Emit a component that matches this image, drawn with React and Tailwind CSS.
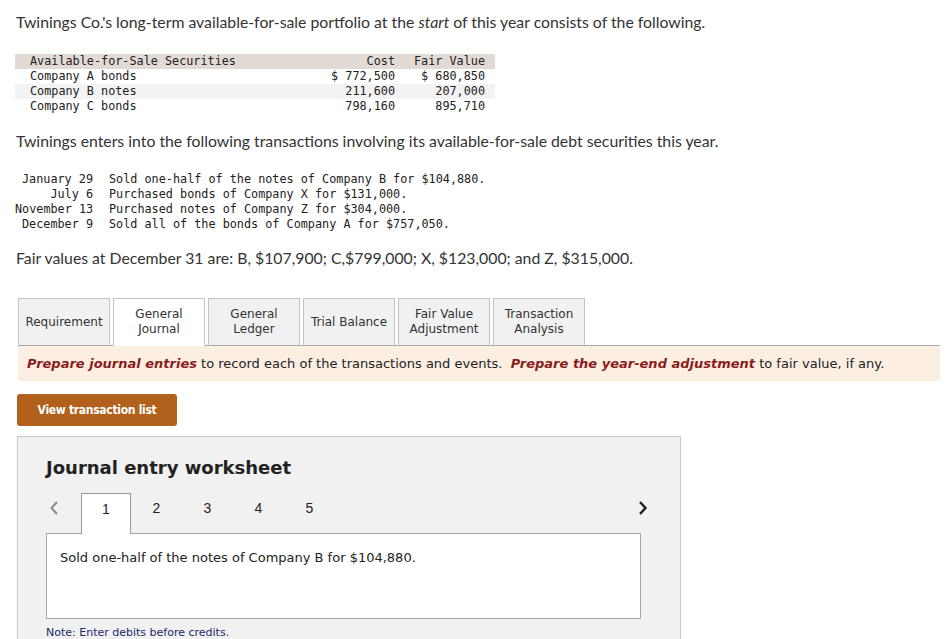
import React from "react";

const holdings = [
  { name: "Company A bonds", cost: "$ 772,500", fair: "$ 680,850" },
  { name: "Company B notes", cost: "211,600", fair: "207,000" },
  { name: "Company C bonds", cost: "798,160", fair: "895,710" },
];

const transactions = [
  ["January 29", "Sold one-half of the notes of Company B for $104,880."],
  ["July 6", "Purchased bonds of Company X for $131,000."],
  ["November 13", "Purchased notes of Company Z for $304,000."],
  ["December 9", "Sold all of the bonds of Company A for $757,050."],
];

const tabs = [
  ["Requirement"],
  ["General", "Journal"],
  ["General", "Ledger"],
  ["Trial Balance"],
  ["Fair Value", "Adjustment"],
  ["Transaction", "Analysis"],
];

const prose = { fontFamily: "Lato, 'Open Sans', sans-serif" };
const mono = { fontFamily: "'DejaVu Sans Mono', 'Liberation Mono', monospace" };
const verdana = { fontFamily: "'DejaVu Sans', Verdana, sans-serif" };

export default function App() {
  return (
    <div className="min-h-[639px] w-[952px] bg-white text-[#333]">
      <p className="pl-4 pt-[12px] text-[15.8px] leading-[20px]" style={prose}>
        Twinings Co.'s long-term available-for-sale portfolio at the <i>start</i> of this year consists of the following.
      </p>

      {/* opening portfolio */}
      <div className="ml-[15px] mt-[22px] w-[480px] text-[11.8px] leading-[15px] text-[#222]" style={mono}>
        <div className="grid grid-cols-[300px_80px_100px] bg-[#e2dad5]">
          <div className="pl-[15px]">Available-for-Sale Securities</div>
          <div className="text-right">Cost</div>
          <div className="pr-[10px] text-right">Fair Value</div>
        </div>
        {holdings.map((h, i) => (
          <div
            key={h.name}
            className={`grid grid-cols-[300px_80px_100px] ${i === 1 ? "bg-[#f3f3f3]" : "bg-white"}`}
          >
            <div className="pl-[15px]">{h.name}</div>
            <div className="whitespace-pre text-right">{h.cost}</div>
            <div className="whitespace-pre pr-[10px] text-right">{h.fair}</div>
          </div>
        ))}
      </div>

      <p className="mt-[17px] pl-4 text-[15.8px] leading-[20px]" style={prose}>
        Twinings enters into the following transactions involving its available-for-sale debt securities this year.
      </p>

      <div
        className="ml-[15px] mt-[21px] grid grid-cols-[78px_1fr] gap-x-[16px] text-[11.8px] leading-[15px] text-[#222]"
        style={mono}
      >
        {transactions.map(([d, t]) => (
          <React.Fragment key={d}>
            <div className="text-right whitespace-nowrap">{d}</div>
            <div>{t}</div>
          </React.Fragment>
        ))}
      </div>

      <p className="mt-[16px] pl-4 text-[15.8px] leading-[20px]" style={prose}>
        Fair values at December 31 are: B, $107,900; C,$799,000; X, $123,000; and Z, $315,000.
      </p>

      {/* tab strip */}
      <div className="ml-[18px] mr-[12px] mt-[30px] flex gap-[3px] border-b border-[#a9a9a9]" style={verdana}>
        {tabs.map((lines, i) => {
          const active = i === 1;
          return (
            <div
              key={lines.join(" ")}
              className={`-mb-px flex h-[48px] w-[92px] flex-col items-center justify-center border border-[#c4c4c4] text-center text-[12px] leading-[15px] text-[#333] ${
                active ? "border-b-white bg-white" : "border-b-[#a9a9a9] bg-[#f1f1f1]"
              }`}
            >
              {lines.map((l) => (
                <span key={l}>{l}</span>
              ))}
            </div>
          );
        })}
      </div>

      <div
        className="ml-[18px] mr-[12px] flex h-[35px] items-center bg-[#fcefe2] pl-[9px] text-[13px] text-[#222]"
        style={verdana}
      >
        <span className="whitespace-pre">
          <b className="italic text-[#8a1c1c]">Prepare journal entries</b> to record each of the transactions and events.{"  "}
          <b className="italic text-[#8a1c1c]">Prepare the year-end adjustment</b> to fair value, if any.
        </span>
      </div>

      <button
        className="ml-[17px] mt-[13px] flex h-[32px] w-[160px] items-center justify-center rounded-[3px] bg-[#b1611b] text-[12px] font-bold tracking-[-0.3px] text-white"
        style={{ fontFamily: "'DejaVu Sans Condensed', 'Liberation Sans Narrow', 'DejaVu Sans', sans-serif" }}
      >
        View transaction list
      </button>

      {/* worksheet */}
      <div className="ml-[17px] mt-[10px] w-[664px] border border-[#c8c8c8] bg-[#f1f1f1] pb-[2px] pl-[28px] pr-[39px] pt-[19px]">
        <h2 className="text-[18px] font-bold leading-[24px] text-[#222]" style={verdana}>
          Journal entry worksheet
        </h2>

        <div className="relative mt-[13px] flex h-[40px] items-start" style={{ fontFamily: "'Liberation Sans', Arial, sans-serif" }}>
          <svg className="ml-[3px] mr-[22px] mt-[7px] h-[16px] w-[10px]" viewBox="0 0 10 16">
            <path d="M8 2 L2.5 8 L8 14" fill="none" stroke="#8a8a8a" strokeWidth="2" />
          </svg>
          <div className="-mb-px flex h-[41px] w-[50px] justify-center border border-b-0 border-[#999] bg-white pt-[6px] text-[14px] leading-[18px] text-[#222]">
            1
          </div>
          {["2", "3", "4", "5"].map((n) => (
            <div key={n} className="flex w-[51px] justify-center pt-[6px] text-[14px] leading-[18px] text-[#222]">
              {n}
            </div>
          ))}
          <svg className="absolute right-[-7px] top-[7px] h-[16px] w-[10px]" viewBox="0 0 10 16">
            <path d="M2 2 L7.5 8 L2 14" fill="none" stroke="#1e1e2e" strokeWidth="2.4" />
          </svg>
        </div>

        <div className="h-[86px] border border-[#a8a8a8] bg-white px-[13px] pt-[14px] text-[13px] text-[#222]" style={verdana}>
          Sold one-half of the notes of Company B for $104,880.
        </div>

        <p className="mt-[7px] text-[11px] leading-[14px] text-[#1c2a6e]" style={verdana}>
          Note: Enter debits before credits.
        </p>
      </div>
    </div>
  );
}
